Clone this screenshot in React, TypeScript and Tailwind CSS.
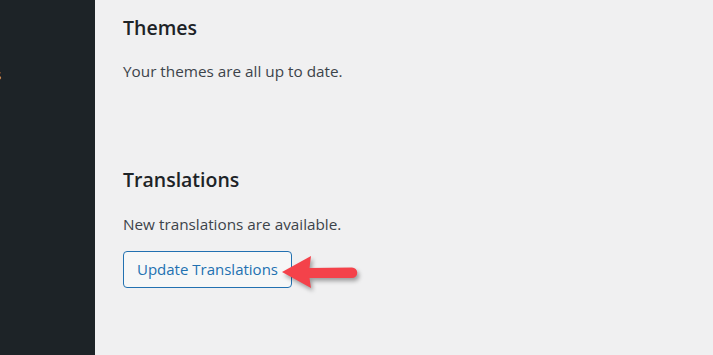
export default function App() {
  return (
    <div
      className="flex h-[355px] w-[713px] overflow-hidden bg-[#f0f0f1]"
      style={{ fontFamily: '"Open Sans", "Noto Sans", sans-serif' }}
    >
      {/* Admin sidebar, scrolled so only a sliver of a menu label shows */}
      <aside className="w-[95px] shrink-0 overflow-hidden bg-[#1d2327] pt-[64px]">
        <span className="-ml-[6px] block text-[15px] leading-[20px] text-[#f0f0f1]">s</span>
      </aside>

      <main className="flex-1 pl-[28px] pt-[13px]">
        <section>
          <h2 className="text-[19.5px] font-semibold leading-[30px] text-[#1d2327]">Themes</h2>
          <p className="mt-[18px] text-[15.3px] leading-[20px] text-[#3c434a]">
            Your themes are all up to date.
          </p>
        </section>

        <section className="mt-[84px]">
          <h2 className="text-[19.5px] font-semibold leading-[30px] text-[#1d2327]">Translations</h2>
          <p className="mt-[19px] text-[15.3px] leading-[20px] text-[#3c434a]">
            New translations are available.
          </p>
          <div className="relative mt-[17px] inline-block">
            <button className="h-[37px] rounded-[4px] border border-[#2271b1] bg-[#f6f7f7] px-[13px] text-[15px] text-[#2271b1]">
              Update Translations
            </button>
            {/* annotation arrow */}
            <svg
              className="absolute left-[157px] top-[2px] drop-shadow-[2px_3px_2px_rgba(0,0,0,0.35)]"
              width="82"
              height="40"
              viewBox="0 0 82 40"
            >
              <path
                d="M2 19 L31 3 L29.5 15 L72 14.5 A5.2 5.2 0 0 1 72 25 L29.5 25 L31 35 Z"
                fill="#f4424a"
              />
            </svg>
          </div>
        </section>
      </main>
    </div>
  );
}
